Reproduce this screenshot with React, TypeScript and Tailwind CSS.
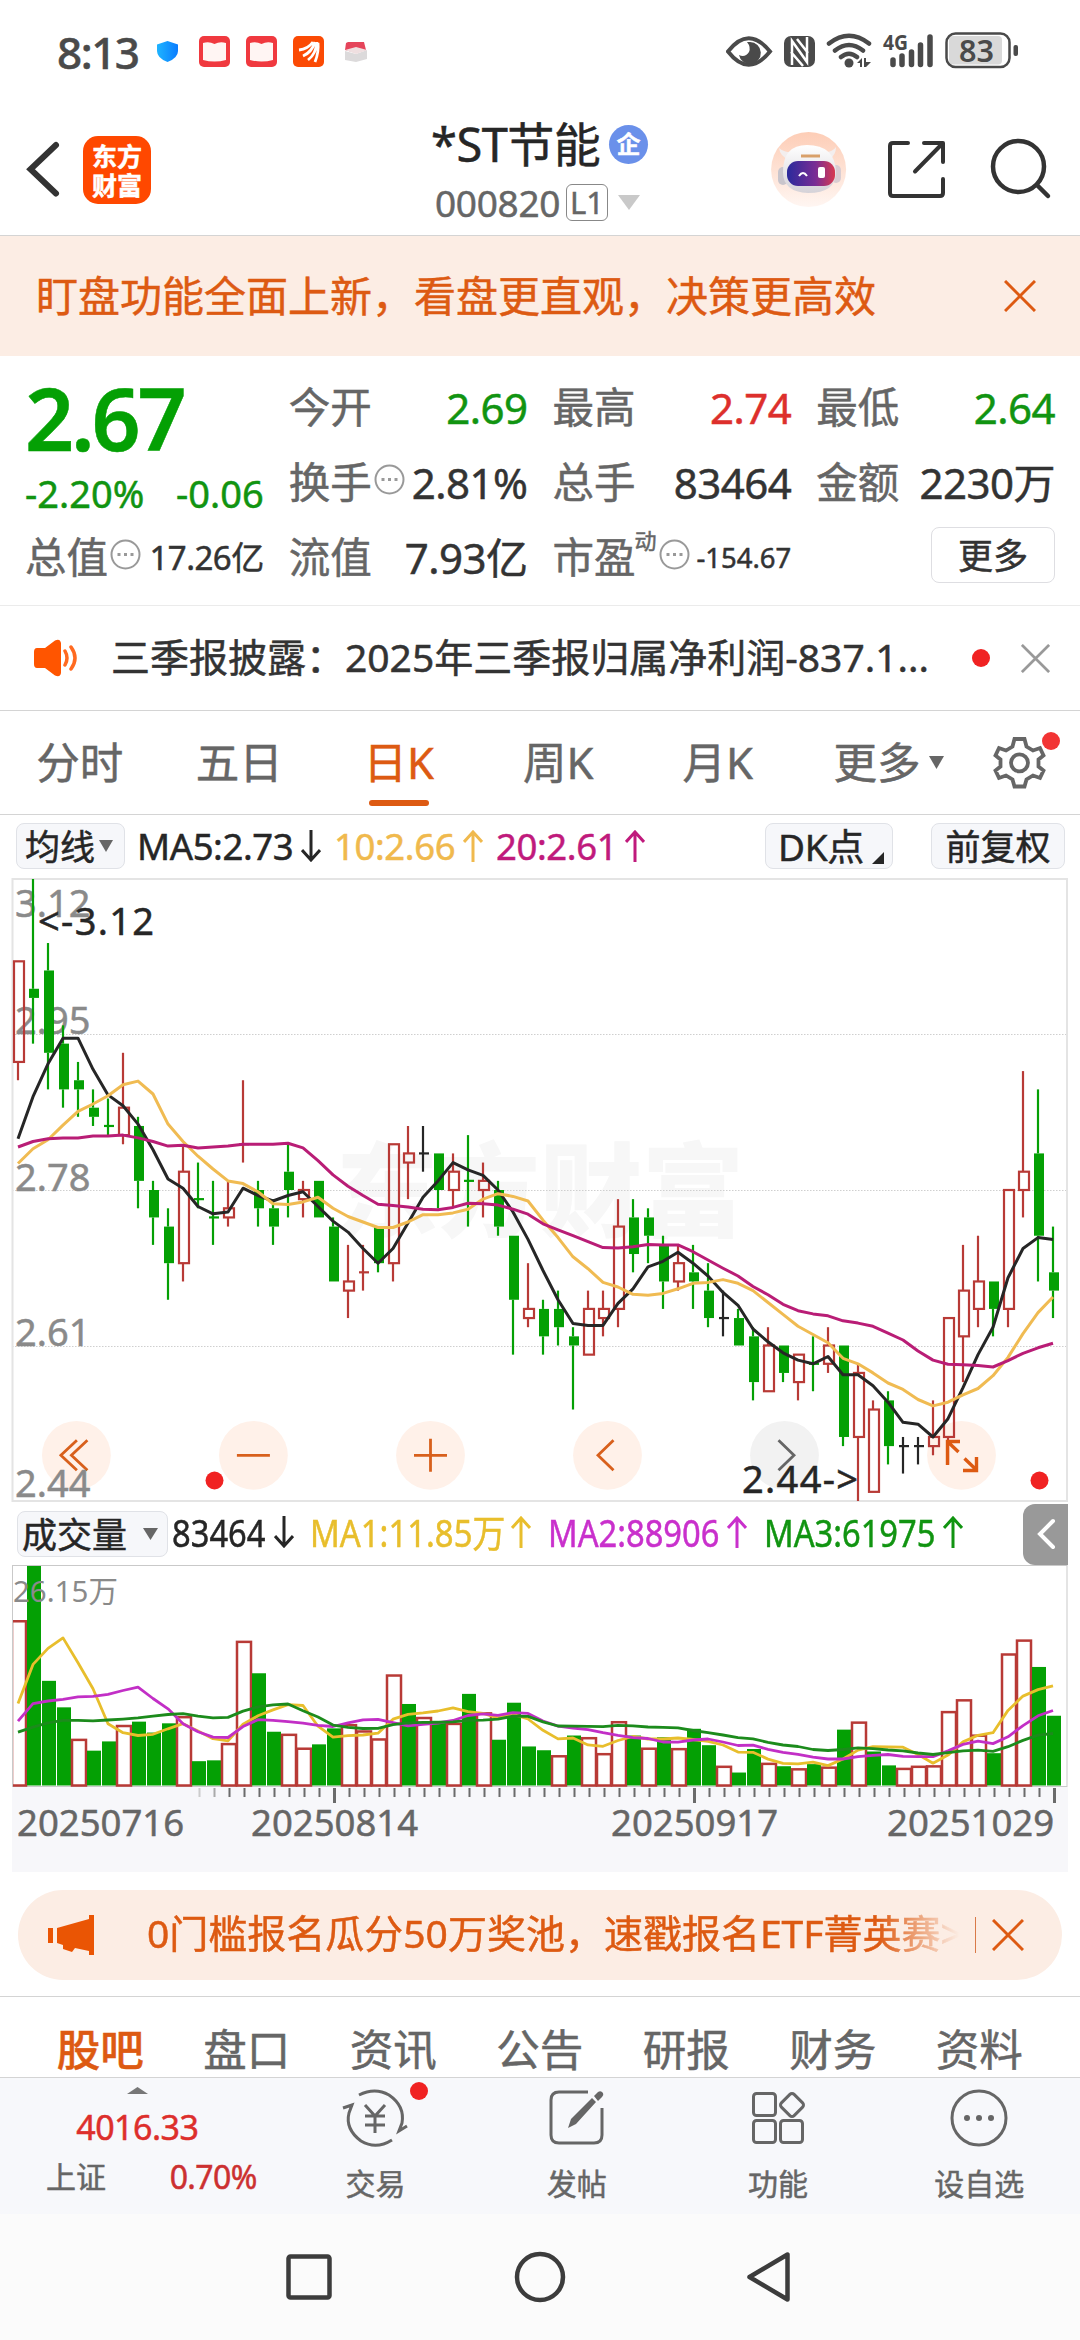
import { ReactNode } from "react";
import clsx from "clsx";

type Candle = [open: number, close: number, high: number, low: number];

// prices in cents
const candles: Candle[] = [
  [292, 303, 303, 290],
  [300, 299, 312, 294],
  [302, 293, 305, 289],
  [294, 289, 296, 287],
  [290, 289, 292, 286],
  [287, 286, 289, 285],
  [285, 285, 288, 284],
  [284, 287, 293, 283],
  [285, 279, 286, 276],
  [278, 275, 279, 272],
  [274, 270, 276, 266],
  [270, 280, 283, 268],
  [277, 277, 281, 276],
  [275, 275, 279, 272],
  [275, 276, 279, 274],
  [283, 283, 290, 281],
  [278, 276, 279, 274],
  [276, 274, 277, 272],
  [280, 278, 283, 275],
  [277, 278, 279, 275],
  [279, 275, 279, 275],
  [274, 268, 275, 268],
  [267, 268, 272, 264],
  [269, 269, 272, 267],
  [274, 270, 274, 269],
  [270, 283, 283, 268],
  [281, 282, 285, 277],
  [282, 282, 285, 280],
  [282, 278, 282, 276],
  [278, 280, 282, 276],
  [279, 279, 284, 274],
  [278, 279, 281, 275],
  [278, 274, 279, 273],
  [273, 266, 273, 260],
  [264, 265, 270, 263],
  [265, 262, 266, 260],
  [265, 263, 267, 261],
  [262, 261, 263, 254],
  [260, 265, 267, 260],
  [264, 265, 267, 262],
  [265, 274, 277, 263],
  [275, 271, 277, 269],
  [275, 273, 276, 270],
  [272, 268, 273, 265],
  [268, 270, 272, 267],
  [269, 268, 272, 265],
  [267, 264, 270, 263],
  [264, 264, 267, 262],
  [264, 261, 265, 261],
  [262, 257, 263, 255],
  [256, 261, 263, 256],
  [261, 258, 261, 257],
  [257, 260, 260, 255],
  [259, 259, 262, 256],
  [259, 261, 263, 258],
  [261, 251, 261, 250],
  [251, 258, 259, 244],
  [245, 254, 255, 245],
  [255, 250, 256, 248],
  [250, 250, 251, 247],
  [250, 250, 251, 248],
  [250, 251, 255, 249],
  [251, 264, 264, 248],
  [262, 267, 272, 257],
  [265, 268, 273, 263],
  [268, 265, 268, 262],
  [265, 278, 278, 263],
  [278, 280, 291, 275],
  [282, 273, 289, 268],
  [269, 267, 274, 264],
];

// in units of 10,000 lots
const volumes = [
  19.7, 26.15, 12.5, 9.35, 5.6, 4.2, 5.3, 7.25, 7.65, 6.35, 7.45, 8.3, 2.95,
  3.05, 5.1, 17.25, 13.4, 6.45, 6.2, 4.55, 4.95, 6.85, 7.35, 6.6, 5.65, 13.25,
  9.75, 8.2, 7.75, 7.5, 10.95, 8.75, 5.5, 9.9, 4.7, 4.25, 3.65, 6.0, 5.8, 3.9,
  7.7, 6.0, 4.55, 5.8, 4.5, 6.8, 4.85, 2.4, 1.6, 4.4, 2.75, 2.35, 2.1, 2.6,
  2.3, 6.7, 7.65, 4.1, 2.45, 2.15, 2.4, 2.45, 8.9, 10.3, 6.1, 3.9, 15.75, 17.4,
  14.15, 8.35,
];

const closes = candles.map((c) => c[1]);

const centerX = (i: number) => 18 + i * 15;
const priceY = (p: number) => 879 + (312 - p) * 9.147;
const volumeY = (v: number) => 1786 - (v / 26.15) * 220;

// the leading averages depend on days before the visible range
const average = (values: number[], days: number, lead: number[]) =>
  values.map((_, i) =>
    i < days - 1
      ? lead[i]
      : values.slice(i - days + 1, i + 1).reduce((a, b) => a + b, 0) / days
  );

const toPoints = (values: number[], scale: (v: number) => number) =>
  values.map((v, i) => `${centerX(i)},${scale(v).toFixed(1)}`).join(" ");

const priceLines = [
  {
    color: "#262626",
    values: average(closes, 5, [283.6, 288.2, 291.8, 294.6]),
  },
  {
    color: "#f0bb52",
    values: average(
      closes,
      10,
      [280.9, 282.5, 283.5, 285.1, 286.6, 287.4, 288.3, 289.5, 289.9]
    ),
  },
  {
    color: "#b91d76",
    values: average(
      closes,
      20,
      [
        282.7, 283.3, 283.6, 283.7, 283.7, 283.9, 283.9, 284, 283.7, 283.3,
        282.8, 282.9, 282.6, 282.7, 282.8, 283, 283, 283, 283.1,
      ]
    ),
  },
];

const volumeLines = [
  { color: "#e8be2c", values: average(volumes, 5, [9.8, 14.45, 16.35, 17.6]) },
  {
    color: "#c22fc6",
    values: average(
      volumes,
      10,
      [7.7, 9.8, 10.1, 10.3, 10.6, 10.65, 10.9, 11.35, 11.75]
    ),
  },
  {
    color: "#1c8b1c",
    values: average(
      volumes,
      20,
      [
        6.4, 7, 7.5, 7.8, 7.8, 7.75, 7.85, 7.95, 8.1, 8.3, 8.5, 8.6, 8.3, 8.1,
        8.15, 8.9, 9.4, 9.65, 9.75,
      ]
    ),
  },
];

const BLACK_DOJIS = [27, 47, 59, 60];
const RED_DOJIS = [15, 23];

function CandleMark({ candle, i }: { candle: Candle; i: number }) {
  const [open, close, high, low] = candle;
  const x = centerX(i);
  const top = priceY(Math.max(open, close));
  const bottom = priceY(Math.min(open, close));
  const flat = open === close;
  let color = close > open ? "#b83a36" : "#04a004";
  if (BLACK_DOJIS.includes(i)) color = "#262626";
  if (RED_DOJIS.includes(i)) color = "#b83a36";

  return (
    <g stroke={color} strokeWidth="2.2" fill="none">
      {high > Math.max(open, close) && (
        <path d={`M${x} ${priceY(high)}V${top}`} />
      )}
      {low < Math.min(open, close) && (
        <path d={`M${x} ${bottom}V${priceY(low)}`} />
      )}
      {flat ? (
        <path d={`M${x - 4} ${top}h10`} />
      ) : close > open ? (
        <rect x={x - 4} y={top} width="10" height={bottom - top} />
      ) : (
        <rect
          x={x - 4}
          y={top}
          width="10"
          height={bottom - top}
          fill={color}
          stroke="none"
        />
      )}
    </g>
  );
}

function RoundControl({
  x,
  muted,
  children,
}: {
  x: number;
  muted?: boolean;
  children?: ReactNode;
}) {
  return (
    <g
      transform={`translate(${x} 1455.3)`}
      fill="none"
      stroke={muted ? "#666" : "#d8601c"}
      strokeWidth="2.8"
    >
      <circle r="34.4" fill={muted ? "#f2f2f2" : "#fff1e9"} stroke="none" />
      {children}
    </g>
  );
}

function PriceChart() {
  return (
    <svg
      className="block"
      width="1080"
      height="626"
      viewBox="0 877 1080 626"
      fontFamily="'Noto Sans', 'Noto Sans CJK SC', sans-serif"
    >
      <text
        x="336"
        y="1229"
        fontSize="102"
        fontWeight="900"
        fill="#f7f7f7"
        fontFamily="'Noto Sans CJK SC', sans-serif"
      >
        东方财富
      </text>
      <g stroke="#cfcfcf" strokeDasharray="1.5 1.5">
        <path d="M12 1034.5H1067M12 1190.5H1067M12 1346.5H1067" />
      </g>
      <rect
        x="12.5"
        y="879"
        width="1054.5"
        height="622"
        fill="none"
        stroke="#e4e4e4"
        strokeWidth="2"
      />
      <RoundControl x={76.4}>
        <path d="M0.5 -15L-15.5 0L0.5 15M11 -15L-5 0L11 15" />
      </RoundControl>
      <RoundControl x={253.4}>
        <path d="M-16.5 0H16.5" />
      </RoundControl>
      <RoundControl x={430.5}>
        <path d="M-16.5 0H16.5M0 -16.5V16.5" />
      </RoundControl>
      <RoundControl x={607.5}>
        <path d="M6 -15L-9.5 0L6 15" />
      </RoundControl>
      <RoundControl x={784.5} muted>
        <path d="M-6 -15L9.5 0L-6 15" />
      </RoundControl>
      <RoundControl x={961.5} />
      <g fill="#8a8a8a" stroke="#8a8a8a" strokeWidth="0.5" fontSize="38">
        <text x="15" y="916.5">3.12</text>
        <text x="15" y="1034">2.95</text>
        <text x="15" y="1190.5">2.78</text>
        <text x="15" y="1346">2.61</text>
        <text x="15" y="1497">2.44</text>
      </g>
      {candles.map((candle, i) => (
        <CandleMark key={i} candle={candle} i={i} />
      ))}
      {priceLines.map((line) => (
        <polyline
          key={line.color}
          points={toPoints(line.values, priceY)}
          fill="none"
          stroke={line.color}
          strokeWidth="3"
          strokeLinejoin="round"
        />
      ))}
      <g fill="none" stroke="#dd5a12" strokeWidth="3.4">
        <path d="M947.5 1465V1441.500H960M948 1442L958.5 1452" />
        <path d="M964.5 1458.5L976 1469.5M976.500 1457V1470.500H963" />
      </g>
      <g fill="#262626" stroke="#262626" strokeWidth="0.5" fontSize="38">
        <text x="38" y="935" textLength="116">
          &lt;-3.12
        </text>
        <text x="742" y="1492.5" textLength="116">
          2.44-&gt;
        </text>
      </g>
      <circle cx="214.5" cy="1480.5" r="9" fill="#f02222" />
      <circle cx="1039.5" cy="1480.5" r="9" fill="#f02222" />
    </svg>
  );
}

function VolumeChart() {
  return (
    <svg
      className="block"
      width="1080"
      height="307"
      viewBox="0 1565 1080 307"
      fontFamily="'Noto Sans', 'Noto Sans CJK SC', sans-serif"
    >
      <clipPath id="volume-area">
        <rect x="13" y="1566" width="1054" height="221" />
      </clipPath>
      <rect x="12" y="1787" width="1056" height="85" fill="#f7f7fa" />
      <rect
        x="12.5"
        y="1565.5"
        width="1054.5"
        height="221"
        fill="none"
        stroke="#c9c9c9"
      />
      <g clipPath="url(#volume-area)">
        {volumes.map((volume, i) => {
          const x = centerX(i);
          const y = volumeY(volume);
          // bars follow the previous close, candles follow the open
          const up = i === 0 || closes[i] >= closes[i - 1];
          return up ? (
            <rect
              key={i}
              x={x - 6}
              y={y + 1}
              width="14"
              height={1784.5 - y}
              fill="#fff"
              stroke="#b83a36"
              strokeWidth="2.5"
            />
          ) : (
            <rect
              key={i}
              x={x - 6}
              y={y}
              width="14"
              height={1785.5 - y}
              fill="#04a004"
            />
          );
        })}
      </g>
      {volumeLines.map((line) => (
        <polyline
          key={line.color}
          points={toPoints(line.values, volumeY)}
          fill="none"
          stroke={line.color}
          strokeWidth="2.8"
          strokeLinejoin="round"
        />
      ))}
      <text x="13" y="1602" fontSize="29.5" fill="#8a8a8a">
        26.15万
      </text>
      {candles.map((_, i) => {
        if (i < 12) return null;
        const major = i === 21 || i === 45 || i === 69;
        return (
          <rect
            key={i}
            x={centerX(i) + (major ? 0 : 0.5)}
            y="1788"
            width={major ? 3 : 2}
            height={major ? 15 : 9}
            fill={i === 12 ? "#ccc" : i === 13 ? "#aaa" : "#6b6b6b"}
          />
        );
      })}
      <g fill="#666" stroke="#666" strokeWidth="0.5" fontSize="36.5">
        <text x="17" y="1836">20250716</text>
        <text x="251" y="1836">20250814</text>
        <text x="611" y="1836">20250917</text>
        <text x="887" y="1836">20251029</text>
      </g>
    </svg>
  );
}

function Cross({ className }: { className: string }) {
  return (
    <svg
      className={className}
      viewBox="0 0 32 32"
      fill="none"
      stroke="currentColor"
      strokeWidth="3"
    >
      <path d="M1 1L31 31M31 1L1 31" />
    </svg>
  );
}

function Arrow({ down }: { down?: boolean }) {
  return (
    <svg
      className={clsx("w-5 h-8 shrink-0", down && "rotate-180")}
      viewBox="0 0 20 32"
      fill="none"
      stroke="currentColor"
      strokeWidth="3"
    >
      <path d="M10 32V2M1 12L10 2L19 12" />
    </svg>
  );
}

function Caret({ className }: { className: string }) {
  return (
    <svg
      className={className}
      viewBox="0 0 16 14"
      preserveAspectRatio="none"
      fill="currentColor"
    >
      <path d="M0 0H16L8 14Z" />
    </svg>
  );
}

function InfoDots() {
  return (
    <svg
      className="w-[31px] h-[31px] ml-[2px] mb-1.5 text-[#999] shrink-0"
      viewBox="0 0 31 31"
      fill="none"
      stroke="currentColor"
      strokeWidth="2"
    >
      <circle cx="15.5" cy="15.5" r="14" />
      <path d="M7.5 15.5h3M14 15.5h3M20.5 15.5h3" strokeWidth="3" />
    </svg>
  );
}

function StatusBar() {
  return (
    <div className="flex items-center h-[104px] pl-[57px] pr-[62px] text-[#4a4a4a]">
      <span className="w-[99px] text-[44px] font-medium tracking-[-1.5px] leading-none">
        8:13
      </span>
      <svg className="w-[213px] h-8" viewBox="156 36 213 32">
        <defs>
          <linearGradient id="shield" x1="0" x2="1">
            <stop offset="0" stopColor="#1fb4ff" />
            <stop offset="1" stopColor="#0a7cff" />
          </linearGradient>
        </defs>
        <path
          d="M167.5 41L178 44.5V51Q178 58 167.5 62Q157 58 157 51V44.5Z"
          fill="url(#shield)"
        />
        <rect x="199" y="36" width="31" height="31" rx="5" fill="#f0393f" />
        <path
          d="M203 43Q209 41 214.5 44Q220 41 226 43V60Q214.5 63 203 60Z"
          fill="#fff5f3"
        />
        <rect x="246" y="36" width="31" height="31" rx="5" fill="#f0393f" />
        <path
          d="M250 43Q256 41 261.5 44Q267 41 273 43V60Q261.5 63 250 60Z"
          fill="#fff5f3"
        />
        <rect x="293" y="36" width="31" height="31" rx="5" fill="#fb4a04" />
        <g fill="none" stroke="#fff" strokeWidth="2.8">
          <path d="M299 50Q308 49 313 42M303 56Q312 52 315 42M308 60Q316 54 317 42M315 62Q319 52 318 43" />
        </g>
        <path d="M345 51L356 54L367 50V59L356 62L345 60Z" fill="#dcdadb" />
        <path d="M346 43L348 42H364L366 50L356 53L345 50Z" fill="#e5445a" />
        <path d="M345 50L356 47L367 50L356 54Z" fill="#efdfe0" />
      </svg>
      <svg className="ml-auto w-[292px] h-10" viewBox="726 32 292 40">
        <g fill="none" stroke="#4a4a4a" strokeWidth="4">
          <path d="M728 51.5Q748.5 25 770 51.5Q748.5 78 728 51.5Z" />
        </g>
        <path
          d="M750 42A11 11 0 1 1 739 55Q745 58 749 52Q751 47 747 42Z"
          fill="#4a4a4a"
        />
        <rect x="784" y="36" width="31" height="31" rx="7" fill="#4a4a4a" />
        <g fill="none" stroke="#fff" strokeWidth="2.5">
          <path d="M792 65V41L807 62V37M797 39L808 53M791 52L803 66" />
        </g>
        <g
          fill="none"
          stroke="#4a4a4a"
          strokeWidth="4.5"
          strokeLinecap="round"
        >
          <path d="M829 43.5Q849 28 869 43.5M835 50.5Q849 39.5 863 50.5M841 57Q849 50.5 857 57" />
        </g>
        <circle cx="849" cy="63" r="4.5" fill="#4a4a4a" />
        <path
          d="M857 63L862 58V67H860V63ZM864 58H866V62H871L866 67H864Z"
          fill="#4a4a4a"
        />
        <text
          x="883"
          y="50"
          fontSize="21"
          fontWeight="700"
          fill="#4a4a4a"
          textLength="25"
          lengthAdjust="spacingAndGlyphs"
          fontFamily="'Noto Sans', sans-serif"
        >
          4G
        </text>
        <g stroke="#4a4a4a" strokeWidth="5.5" strokeLinecap="round">
          <path d="M893 60V64.5M902 56V64.5M911.5 52V64.5M920.5 45V64.5M930 37V64.5" />
        </g>
        <rect x="949" y="36" width="53" height="28.5" rx="4" fill="#d9d9d9" />
        <rect
          x="946.5"
          y="33.5"
          width="63"
          height="33.5"
          rx="9"
          fill="none"
          stroke="#4a4a4a"
          strokeWidth="2.5"
        />
        <rect x="1013.5" y="45" width="4.5" height="11" rx="2" fill="#4a4a4a" />
        <text
          x="959"
          y="61.5"
          fontSize="31"
          fontWeight="600"
          fill="#4a4a4a"
          textLength="35"
          lengthAdjust="spacingAndGlyphs"
          fontFamily="'Noto Sans', sans-serif"
        >
          83
        </text>
      </svg>
    </div>
  );
}

function Header() {
  return (
    <div className="flex h-[132px] border-b border-[#d4d4d4] pl-[26px] pr-7">
      <svg
        className="w-9 h-[60px] mt-[35px]"
        viewBox="26 139 36 60"
        fill="none"
        stroke="#333"
        strokeWidth="6"
        strokeLinecap="round"
      >
        <path d="M56 145L30.5 169.3L56 193.5" />
      </svg>
      <div className="flex flex-col items-center justify-center w-[68px] h-[68px] mt-8 ml-[21px] rounded-[15px] bg-[#ff4800] font-['Noto_Sans_CJK_SC',sans-serif] text-[25px] font-bold leading-[29px] text-white">
        <span>东方</span>
        <span>财富</span>
      </div>
      <div className="w-[240px] ml-[280px]">
        <div className="flex items-center h-[46px] mt-[17px] text-[#262626]">
          <span className="text-[47px] leading-none whitespace-nowrap w-[178px] tracking-[-0.5px]">
            *ST节能
          </span>
          <span className="flex items-center justify-center w-[39px] h-[39px] rounded-full bg-[#6a90ea] text-[24px] font-bold leading-none text-white">
            企
          </span>
        </div>
        <div className="flex items-center h-[46px] mt-[12px] pl-1 text-[#666]">
          <span className="w-[131px] text-[37px] leading-none tracking-[-0.3px]">
            000820
          </span>
          <span className="flex items-center justify-center w-[42px] h-[37px] rounded-md border border-[#888] text-[31px] leading-none">
            L1
          </span>
          <Caret className="w-[22px] h-[15px] ml-2.5 text-[#c9c9c9]" />
        </div>
      </div>
      <svg
        className="w-[282px] h-20 mt-[25px] ml-auto"
        viewBox="770 129 282 80"
        fill="none"
      >
        <defs>
          <linearGradient id="bot-bg" x1="0" y1="0" x2="0" y2="1">
            <stop offset="0" stopColor="#fdcdb6" />
            <stop offset="1" stopColor="#fff6f2" />
          </linearGradient>
          <linearGradient id="bot-visor" x1="0" x2="1">
            <stop offset="0" stopColor="#2a2a9c" />
            <stop offset="0.6" stopColor="#7a2d94" />
            <stop offset="1" stopColor="#d83a50" />
          </linearGradient>
          <linearGradient id="bot-head" x1="0" y1="0" x2="0" y2="1">
            <stop offset="0" stopColor="#fff" />
            <stop offset="1" stopColor="#d5d2d8" />
          </linearGradient>
        </defs>
        <circle cx="808.6" cy="169.5" r="37.5" fill="url(#bot-bg)" />
        <path
          d="M779 148Q780 156 789 160L794 152Q784 153 779 148ZM836 147Q836 155 829 160L823 152Q832 153 836 147Z"
          fill="#f3eeee"
        />
        <rect x="778" y="167" width="10" height="18" rx="5" fill="#c9c5cc" />
        <rect x="831" y="165" width="10" height="18" rx="5" fill="#d9cdd2" />
        <path
          d="M783 172Q783 145 807 145Q835 145 836 172Q836 193 808 193Q783 192 783 172Z"
          fill="url(#bot-head)"
        />
        <path d="M801 156H820" stroke="#d9a06a" strokeWidth="3" />
        <rect
          x="787"
          y="161"
          width="48"
          height="25"
          rx="11"
          fill="url(#bot-visor)"
        />
        <path d="M799 176Q803 170 807 176" stroke="#fff" strokeWidth="2" />
        <rect x="818" y="167" width="7" height="11" rx="2" fill="#fff" />
        <g
          stroke="#333"
          strokeWidth="4"
          strokeLinecap="round"
          strokeLinejoin="round"
        >
          <path d="M908 143H893Q890 143 890 146V193Q890 196 893 196H940Q943 196 943 193V179" />
          <path d="M924 143H943V162M942 144L915 171.5" />
        </g>
        <g stroke="#333" strokeWidth="4.5" strokeLinecap="round">
          <circle cx="1018.5" cy="166.5" r="25.5" />
          <path d="M1037 185L1048 196" />
        </g>
      </svg>
    </div>
  );
}

function Stat({
  label,
  value,
  tone,
  info,
  small,
}: {
  label: string;
  value: string;
  tone?: "up" | "down";
  info?: boolean;
  small?: boolean;
}) {
  return (
    <div className="flex items-center h-[75px] leading-none">
      <span className="text-[41.5px] text-[#666]">{label}</span>
      {info && <InfoDots />}
      <span
        className={clsx(
          "ml-auto whitespace-nowrap tracking-[-0.5px]",
          small ? "text-[33px]" : "text-[42px]",
          tone === "up" && "text-[#dd2f2c]",
          tone === "down" && "text-[#119411]",
          !tone && "text-[#333]"
        )}
      >
        {value}
      </span>
    </div>
  );
}

function Quote() {
  return (
    <div className="grid grid-cols-4 gap-x-[25px] h-[250px] px-[25px] pt-[14px] border-b border-[#ebebeb]">
      <div>
        <div className="flex items-center h-[96px] text-[86px] font-semibold tracking-[-3.2px] leading-none text-[#04a004]">
          2.67
        </div>
        <div className="flex justify-between items-center h-[54px] text-[38px] leading-none text-[#119411]">
          <span>-2.20%</span>
          <span>-0.06</span>
        </div>
        <Stat label="总值" value="17.26亿" info small />
      </div>
      <div>
        <Stat label="今开" value="2.69" tone="down" />
        <Stat label="换手" value="2.81%" info />
        <Stat label="流值" value="7.93亿" />
      </div>
      <div>
        <Stat label="最高" value="2.74" tone="up" />
        <Stat label="总手" value="83464" />
        <div className="flex items-center h-[75px] leading-none">
          <span className="text-[41.5px] text-[#666]">市盈</span>
          <span className="-ml-px mb-9 text-[22px] text-[#666]">动</span>
          <InfoDots />
          <span className="ml-auto text-[27.5px] text-[#333]">-154.67</span>
        </div>
      </div>
      <div>
        <Stat label="最低" value="2.64" tone="down" />
        <Stat label="金额" value="2230万" />
        <button className="flex items-center justify-center w-[124px] h-[56px] mt-[7px] ml-auto rounded-lg border border-[#dedee2] text-[35px] leading-none text-[#333]">
          更多
        </button>
      </div>
    </div>
  );
}

function Notice() {
  return (
    <div className="flex items-center h-[105px] pl-[33px] pr-[30px] border-b border-[#d4d4d4]">
      <svg className="w-[46px] h-[38px] shrink-0" viewBox="0 0 46 38">
        <path
          d="M4 9H12L22 1.5Q27 -1 28 4V34Q27 39 22 36.5L12 29H4Q1 29 1 25V13Q1 9 4 9Z"
          fill="#ff5500"
        />
        <g
          fill="none"
          stroke="#ff6a20"
          strokeWidth="3.5"
          strokeLinecap="round"
        >
          <path d="M32 12Q36 19 32 26M38 8Q46 19 38 30" />
        </g>
      </svg>
      <span className="ml-[32px] mb-1 text-[39px] leading-none whitespace-nowrap text-[#333]">
        三季报披露：2025年三季报归属净利润-837.1...
      </span>
      <span className="ml-auto w-[18px] h-[18px] rounded-full bg-[#f02222]" />
      <Cross className="w-[29px] h-[29px] ml-[31px] text-[#999]" />
    </div>
  );
}

const periods = ["分时", "五日", "日K", "周K", "月K"];

function PeriodTabs() {
  return (
    <div className="flex items-center h-[104px] border-b border-[#d4d4d4] text-[43.5px] leading-none text-[#666]">
      {periods.map((period) => {
        const active = period === "日K";
        return (
          <div
            key={period}
            className={clsx(
              "relative flex items-center justify-center w-[159.5px] h-full",
              active && "text-[#dd5a12]"
            )}
          >
            {period}
            {active && (
              <span className="absolute bottom-2 w-[60px] h-[6px] rounded-full bg-[#dd5a12]" />
            )}
          </div>
        );
      })}
      <span className="ml-[36px]">更多</span>
      <Caret className="w-[15px] h-[13px] ml-[8px]" />
      <svg
        className="w-20 h-[72px] ml-[43px] mb-2"
        viewBox="986 724 80 72"
        fill="none"
        stroke="#666"
        strokeWidth="3.8"
      >
        <path d="M1013.5 740H1023.5L1025.5 747.5L1032 751.5L1039 749L1042.500 756.5L1037.5 760.5V767.5L1042.5 771.5L1039 779L1032 776.5L1025.5 780.5L1023.5 787.5H1013.5L1011.5 780.5L1005 776.5L998 779L994.5 771.5L999.5 767.5V760.5L994.5 756.5L998 749L1005 751.5L1011.5 747.5Z" />
        <circle cx="1018.5" cy="763.8" r="8.5" />
        <circle cx="1050" cy="742" r="9" fill="#f23434" stroke="none" />
      </svg>
    </div>
  );
}

function Chip({
  className,
  children,
}: {
  className: string;
  children: ReactNode;
}) {
  return (
    <span
      className={clsx(
        "flex items-center h-[46px] rounded-lg border border-[#e0e2e7] bg-[#f6f7fa] text-[35px] text-[#262626] whitespace-nowrap shrink-0",
        className
      )}
    >
      {children}
    </span>
  );
}

function PriceLegend() {
  return (
    <div className="flex items-center h-[62px] pl-4 pr-[15px] text-[36.5px] leading-none">
      <Chip className="w-[109px] pl-2">
        均线
        <Caret className="w-[14px] h-3 ml-1 text-[#666]" />
      </Chip>
      <span className="flex items-center gap-2 w-[197px] pl-[12px] tracking-[-0.4px] text-[#262626]">
        MA5:2.73
        <Arrow down />
      </span>
      <span className="flex items-center gap-2 w-[160px] pl-[12px] tracking-[-0.4px] text-[#f0b94d]">
        10:2.66
        <Arrow />
      </span>
      <span className="flex items-center gap-2 pl-[14px] tracking-[-0.4px] text-[#c01a7c]">
        20:2.61
        <Arrow />
      </span>
      <Chip className="w-[128px] pl-[12px] ml-auto">
        <span className="text-[37px] tracking-[-0.3px]">DK点</span>
        <svg className="w-3 h-3 mt-6 ml-2" viewBox="0 0 12 12" fill="#262626">
          <path d="M12 0V12H0Z" />
        </svg>
      </Chip>
      <Chip className="w-[134px] justify-center ml-[38px]">前复权</Chip>
    </div>
  );
}

function VolumeLegend() {
  return (
    <div className="flex items-center h-[62px] pl-[17px] pr-3 text-[38px] leading-none">
      <Chip className="w-[151px] pl-1">
        成交量
        <Caret className="w-[15px] h-3 ml-4 text-[#666]" />
      </Chip>
      <span className="flex items-center w-[141px] ml-1 mb-1 text-[#262626]">
        <span className="origin-left scale-x-[0.86] w-[102px]">83464</span>
        <Arrow down />
      </span>
      <span className="flex items-center w-[238px] -ml-[3px] mb-1 text-[#e8be2c]">
        <span className="origin-left scale-x-[0.865] w-[201px] whitespace-nowrap">
          MA1:11.85万
        </span>
        <Arrow />
      </span>
      <span className="flex items-center w-[216px] mb-1 text-[#c930cc]">
        <span className="origin-left scale-x-[0.86] w-[179px]">MA2:88906</span>
        <Arrow />
      </span>
      <span className="flex items-center mb-1 text-[#119411]">
        <span className="origin-left scale-x-[0.86] w-[179px]">MA3:61975</span>
        <Arrow />
      </span>
      <span className="flex items-center justify-center w-[45px] h-[61px] ml-auto shrink-0 rounded-l-xl bg-[#999]">
        <svg
          className="w-5 h-8"
          viewBox="0 0 20 32"
          fill="none"
          stroke="#fff"
          strokeWidth="4"
          strokeLinecap="round"
        >
          <path d="M17 3L4 16L17 29" />
        </svg>
      </span>
    </div>
  );
}

function Promo() {
  return (
    <div className="h-[125px] pt-[18px] px-[18px] border-b border-[#d4d4d4]">
      <div className="flex items-center h-[90px] pl-[30px] pr-[38px] rounded-full bg-[#fcede4] text-[#dd5a12]">
        <svg
          className="w-[46px] h-10 shrink-0"
          viewBox="0 0 46 40"
          fill="#ea5504"
        >
          <path d="M0 13H5V28H0ZM9 13L41 4V0H46V40H41V36L27 33L24 37L15 34V30L9 28Z" />
        </svg>
        <span className="w-[812px] ml-[53px] mb-1 overflow-hidden whitespace-nowrap text-[39px] leading-[56px] mask-r-from-90% mask-r-to-100%">
          0门槛报名瓜分50万奖池，速戳报名ETF菁英赛&gt;&gt;
        </span>
        <span className="w-px h-9 ml-[16px] bg-[#d97a48]" />
        <Cross className="w-8 h-8 ml-auto" />
      </div>
    </div>
  );
}

const sections = ["股吧", "盘口", "资讯", "公告", "研报", "财务", "资料"];

function SectionTabs() {
  return (
    <div className="flex h-[81px] pl-[27px] pt-[31px] border-b border-[#d4d4d4] text-[43.5px] leading-none text-[#666]">
      {sections.map((section) => (
        <span
          key={section}
          className={clsx(
            "w-[146.5px] text-center",
            section === "股吧" && "font-medium text-[#dd5a12]"
          )}
        >
          {section}
        </span>
      ))}
    </div>
  );
}

function BarItem({ label, children }: { label: string; children: ReactNode }) {
  return (
    <div className="flex flex-col items-center w-[201.5px] pt-[2px] text-[30px] leading-none text-[#666]">
      <svg
        className="w-[120px] h-[74px]"
        viewBox="-60 -38 120 74"
        fill="none"
        stroke="#666"
        strokeWidth="3"
      >
        {children}
      </svg>
      <span className="mt-[15px]">{label}</span>
    </div>
  );
}

function BottomBar() {
  return (
    <div className="flex h-[136px] bg-[#f7f8fb]">
      <div className="flex flex-col items-center w-[275px] pt-[9px] leading-none">
        <svg className="w-[21px] h-[7px]" viewBox="0 0 21 7" fill="#777">
          <path d="M0 7L10.5 0L21 7Z" />
        </svg>
        <span className="mt-[16px] text-[34px] tracking-[-0.5px] text-[#dd2f2c]">
          4016.33
        </span>
        <div className="flex items-center self-stretch justify-between mt-[17px] pl-[46px] pr-[18px]">
          <span className="text-[30px] text-[#666]">上证</span>
          <span className="text-[32px] text-[#cc3030] tracking-[-0.6px]">
            0.70%
          </span>
        </div>
      </div>
      <BarItem label="交易">
        <path d="M-16 -23Q0 -31 14 -23Q30 -12 27 5L24 13L32 8" />
        <path d="M17 22Q1 32 -14 23Q-30 11 -26 -5L-23 -13L-32 -10" />
        <path d="M-10 -13L0 -2L10 -13M0 -2V15M-10 -2H10M-10 7H10" />
        <circle cx="44" cy="-27" r="9" fill="#f02222" stroke="none" />
      </BarItem>
      <BarItem label="发帖">
        <path d="M11 -26H-18Q-26 -26 -26 -18V17Q-26 25 -18 25H17Q25 25 25 17V-10" />
        <path
          d="M-9 10L-6 1L15 -20L19 -16L-1 6ZM17 -22L21 -26Q24 -28 26 -25Q27 -23 25 -21L21 -17Z"
          fill="#666"
          stroke="none"
        />
      </BarItem>
      <BarItem label="功能">
        <rect x="-24.5" y="-24.5" width="22" height="22" rx="3" />
        <rect x="-24.5" y="2.5" width="22" height="22" rx="3" />
        <rect x="2.5" y="2.5" width="22" height="22" rx="3" />
        <rect
          x="5"
          y="-22"
          width="18"
          height="18"
          rx="3"
          transform="rotate(45 14 -13)"
        />
      </BarItem>
      <BarItem label="设自选">
        <circle r="27" />
        <g fill="#666" stroke="none">
          <circle cx="-12" r="3" />
          <circle r="3" />
          <circle cx="12" r="3" />
        </g>
      </BarItem>
    </div>
  );
}

function SystemNav() {
  return (
    <div className="h-[126px] bg-[#fbfbfb]">
      <svg
        className="block"
        width="1080"
        height="126"
        viewBox="0 2214 1080 126"
        fill="none"
        stroke="#3c3c3c"
        strokeWidth="4.5"
        strokeLinejoin="round"
      >
        <rect x="288.5" y="2256.5" width="41" height="41" rx="2" />
        <circle cx="540" cy="2277" r="23" />
        <path d="M787.5 2254.5V2299.5L749.5 2277Z" />
      </svg>
    </div>
  );
}

export default function App() {
  return (
    <div className="w-[1080px] h-[2340px] overflow-hidden bg-white font-['Noto_Sans','Noto_Sans_CJK_SC',sans-serif] [-webkit-text-stroke:0.5px]">
      <StatusBar />
      <Header />
      <div className="flex items-center justify-between h-[120px] pl-9 pr-[44px] bg-[#fcede4] text-[42px] leading-none text-[#dd5a12]">
        <span>盯盘功能全面上新，看盘更直观，决策更高效</span>
        <Cross className="w-8 h-8" />
      </div>
      <Quote />
      <Notice />
      <PeriodTabs />
      <PriceLegend />
      <PriceChart />
      <VolumeLegend />
      <VolumeChart />
      <Promo />
      <SectionTabs />
      <BottomBar />
      <SystemNav />
    </div>
  );
}
